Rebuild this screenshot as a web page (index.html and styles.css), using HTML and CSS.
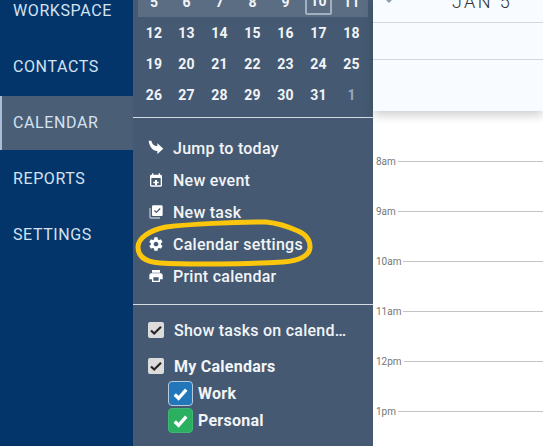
FILE: index.html
```html
<!DOCTYPE html>
<html lang="en">
<head>
    <meta charset="UTF-8">
    <meta name="viewport" content="width=device-width, initial-scale=1.0">
    <title>Calendar</title>
    <link rel="stylesheet" href="styles.css">
</head>
<body>

<div class="app">
    <nav class="nav">
        <a class="nav-item">WORKSPACE</a>
        <a class="nav-item">CONTACTS</a>
        <a class="nav-item active">CALENDAR</a>
        <a class="nav-item">REPORTS</a>
        <a class="nav-item">SETTINGS</a>
    </nav>

    <aside class="panel">
        <div class="month">
            <div class="week current">
                <span>5</span><span>6</span><span>7</span><span>8</span><span>9</span><span class="today">10</span><span>11</span>
            </div>
            <div class="week">
                <span>12</span><span>13</span><span>14</span><span>15</span><span>16</span><span>17</span><span>18</span>
            </div>
            <div class="week">
                <span>19</span><span>20</span><span>21</span><span>22</span><span>23</span><span>24</span><span>25</span>
            </div>
            <div class="week">
                <span>26</span><span>27</span><span>28</span><span>29</span><span>30</span><span>31</span><span class="other">1</span>
            </div>
        </div>

        <ul class="menu">
            <li>
                <svg class="icon" viewBox="0 0 24 24"><path d="M1 1h4c1 5 4 8 9 8.500V5l9 8-9 8v-4.500C7 16 2 10 1 1z"/></svg>
                Jump to today
            </li>
            <li>
                <svg class="icon" viewBox="0 0 24 24"><path d="M19 4h-1V2h-2v2H8V2H6v2H5C3.900 4 3 4.900 3 6v14c0 1.100.9 2 2 2h14c1.100 0 2-.9 2-2V6c0-1.100-.9-2-2-2zm0 16H5V9h14v11zm-8.500-8h3v2.500H16v2.500h-2.500v2.500h-3V17H8v-2.500h2.500V12z"/></svg>
                New event
            </li>
            <li>
                <svg class="icon" viewBox="0 0 24 24">
                    <path class="faded" d="M4 6H2v14c0 1.100.9 2 2 2h14v-2H4V6z"/>
                    <path d="M20 2H8C6.900 2 6 2.900 6 4v12c0 1.100.9 2 2 2h12c1.100 0 2-.9 2-2V4c0-1.100-.9-2-2-2zm-7.500 12L9 10.500l1.400-1.400 2.100 2.100 5.100-5.100L19 7.500 12.500 14z"/>
                </svg>
                New task
            </li>
            <li>
                <svg class="icon" viewBox="0 0 24 24"><path d="M19.400 13c.04-.3.1-.7.1-1s0-.7-.1-1l2.100-1.600c.2-.2.2-.4.1-.6l-2-3.500c-.1-.2-.4-.3-.6-.2l-2.500 1c-.5-.4-1.100-.7-1.700-1l-.4-2.700c0-.2-.2-.4-.5-.4h-4c-.3 0-.5.2-.5.400l-.4 2.700c-.6.3-1.200.6-1.700 1l-2.500-1c-.2-.1-.5 0-.6.200l-2 3.500c-.1.200-.1.400.1.600L4.400 11c0 .3-.1.700-.1 1s0 .7.1 1l-2.100 1.600c-.2.2-.2.4-.1.6l2 3.500c.1.200.4.300.6.200l2.500-1c.5.4 1.100.7 1.700 1l.4 2.700c0 .2.2.4.5.4h4c.3 0 .5-.2.5-.4l.4-2.700c.6-.3 1.200-.6 1.700-1l2.500 1c.2.1.5 0 .6-.2l2-3.500c.1-.2.1-.4-.1-.6L19.400 13zM12 15.500c-1.900 0-3.500-1.600-3.500-3.500s1.600-3.500 3.500-3.500 3.500 1.600 3.500 3.500-1.600 3.500-3.500 3.500z"/></svg>
                Calendar settings
            </li>
            <li>
                <svg class="icon" viewBox="0 0 24 24"><path d="M19 8H5c-1.700 0-3 1.300-3 3v6h4v4h12v-4h4v-6c0-1.700-1.300-3-3-3zm-3 11H8v-5h8v5zM18 3H6v4h12V3z"/></svg>
                Print calendar
            </li>
        </ul>

        <div class="filters">
            <div class="filter show-tasks">
                <span class="check"><svg viewBox="0 0 16 16"><path d="M3 8.500l3.200 3L13 4.800"/></svg></span>
                <span class="truncate">Show tasks on calendar</span>
            </div>
            <div class="filter my-cals">
                <span class="check"><svg viewBox="0 0 16 16"><path d="M3 8.500l3.200 3L13 4.800"/></svg></span>
                My Calendars
            </div>
            <div class="cal-row">
                <span class="swatch blue"><svg viewBox="0 0 24 24"><path d="M6 13l4 4 8-9"/></svg></span>
                Work
            </div>
            <div class="cal-row">
                <span class="swatch green"><svg viewBox="0 0 24 24"><path d="M6 13l4 4 8-9"/></svg></span>
                Personal
            </div>
        </div>
    </aside>

    <main class="main">
        <div class="day-head">
            <div class="day-title">
                <span class="prev"></span>
                <span class="date">JAN 5</span>
            </div>
            <div class="head-row"></div>
            <div class="head-row last"></div>
        </div>
        <div class="hours">
            <div class="hour"><span>8am</span></div>
            <div class="hour"><span>9am</span></div>
            <div class="hour"><span>10am</span></div>
            <div class="hour"><span>11am</span></div>
            <div class="hour"><span>12pm</span></div>
            <div class="hour"><span>1pm</span></div>
        </div>
    </main>

    <svg class="scribble" viewBox="0 0 543 446">
        <path d="M266 222C235 222 190 224 166 227C150 230 138 238 138 247C138 257 146 262 160 263C190 265 250 264 283 262C300 261 310 255 310 247C310 239 305 234 298 231C287 226 276 223 266 222Z"/>
    </svg>
</div>

</body>
</html>
```
FILE: styles.css
```css
body {
    margin: 0;
    font-family: Roboto, "Liberation Sans", sans-serif;
    background-color: #fff;
}

.app {
    position: relative;
    display: flex;
    width: 543px;
    height: 446px;
    overflow: hidden;
}

/* left nav */
.nav {
    width: 133px;
    flex-shrink: 0;
    margin-top: -18px;
    background-color: #03356b;
}

.nav-item {
    display: flex;
    align-items: center;
    height: 56px;
    padding-left: 13px;
    font-size: 16px;
    letter-spacing: 0.6px;
    color: #d5e2f0;
}

.nav-item.active {
    height: 52px;
    margin-top: 2px;
    padding-bottom: 2px;
    padding-left: 11px;
    border-left: 2px solid #a9bed6;
    background-color: #4a5e76;
}

/* calendar panel */
.panel {
    width: 240px;
    flex-shrink: 0;
    background-color: #455a72;
    color: #f2f4f7;
}

.month {
    margin-top: -14px;
    padding: 0 5px 7px;
    border-bottom: 1px solid #d5dbe2;
}

.week {
    display: grid;
    grid-template-columns: 32px repeat(6, 33px);
    height: 31px;
    align-items: center;
    justify-items: center;
    font-size: 14px;
    font-weight: 700;
    letter-spacing: 0.2px;
}

.week.current {
    width: 230px;
    background-color: #5b6d83;
}

.today {
    width: 23px;
    height: 23px;
    line-height: 23px;
    text-align: center;
    border: 2px solid #a3b0bf;
    border-radius: 2px;
}

.other {
    color: #9aa7b6;
}

.menu {
    list-style: none;
    margin: 0;
    padding: 14px 0 12px;
    border-bottom: 1px solid #d5dbe2;
}

.menu li {
    display: flex;
    align-items: center;
    gap: 9px;
    height: 32px;
    padding-left: 15px;
    font-size: 16px;
    font-weight: 500;
    letter-spacing: 0.25px;
}

.icon {
    width: 16px;
    height: 16px;
    fill: #fff;
}

.icon .faded {
    opacity: 0.6;
}

.filters {
    padding: 15px 0 0 15px;
    font-size: 16px;
    font-weight: 500;
    letter-spacing: 0.25px;
}

.filter {
    display: flex;
    align-items: center;
    gap: 10px;
    height: 20px;
}

.show-tasks {
    margin-bottom: 16px;
}

.my-cals {
    margin-bottom: 4px;
    font-weight: 700;
}

.truncate {
    width: 174px;
    white-space: nowrap;
    overflow: hidden;
    text-overflow: ellipsis;
}

.check {
    width: 16px;
    height: 16px;
    background-color: #dcdcdc;
    border-radius: 2px;
}

.check svg {
    display: block;
    fill: none;
    stroke: #2b2626;
    stroke-width: 2.200;
}

.cal-row {
    display: flex;
    align-items: center;
    gap: 5px;
    height: 27px;
    margin-left: 20px;
    font-weight: 700;
}

.swatch {
    width: 23px;
    height: 23px;
    border: 1px solid #b7c9dc;
    border-radius: 4px;
}

.swatch svg {
    display: block;
    fill: none;
    stroke: #fff;
    stroke-width: 3.500;
}

.swatch.blue {
    background-color: #2277bb;
}

.swatch.green {
    border-color: #40b873;
    background-color: #2bb062;
}

/* day view */
.main {
    flex: 1;
    min-width: 0;
}

.day-head {
    height: 111px;
    background-color: #f8fbff;
    box-shadow: 0 4px 10px rgba(0, 0, 0, 0.2);
}

.day-title {
    position: relative;
    display: flex;
    height: 22px;
    padding-left: 79px;
    border-bottom: 1px solid #d3d8de;
}

.date {
    margin-top: -9px;
    font-size: 18px;
    font-weight: 300;
    letter-spacing: 2.400px;
    color: #333;
}

.prev {
    position: absolute;
    left: 13px;
    top: 0;
    border: 3px solid transparent;
    border-top-color: #8d9db0;
}

.head-row {
    height: 36px;
    border-bottom: 1px solid #d3d8de;
}

.head-row.last {
    border-bottom: 0;
}

.hours {
    padding-top: 25px;
}

.hour {
    display: flex;
    align-items: center;
    gap: 2px;
    height: 50px;
    font-size: 10px;
    color: #777;
}

.hour span {
    margin-left: 3px;
}

.hour::after {
    content: "";
    flex: 1;
    height: 1px;
    background-color: #c4c4c4;
}

/* hand drawn highlight over the menu */
.scribble {
    position: absolute;
    top: 0;
    left: 0;
    width: 543px;
    height: 446px;
    fill: none;
    stroke: #fcc60d;
    stroke-width: 5;
    pointer-events: none;
}
```
